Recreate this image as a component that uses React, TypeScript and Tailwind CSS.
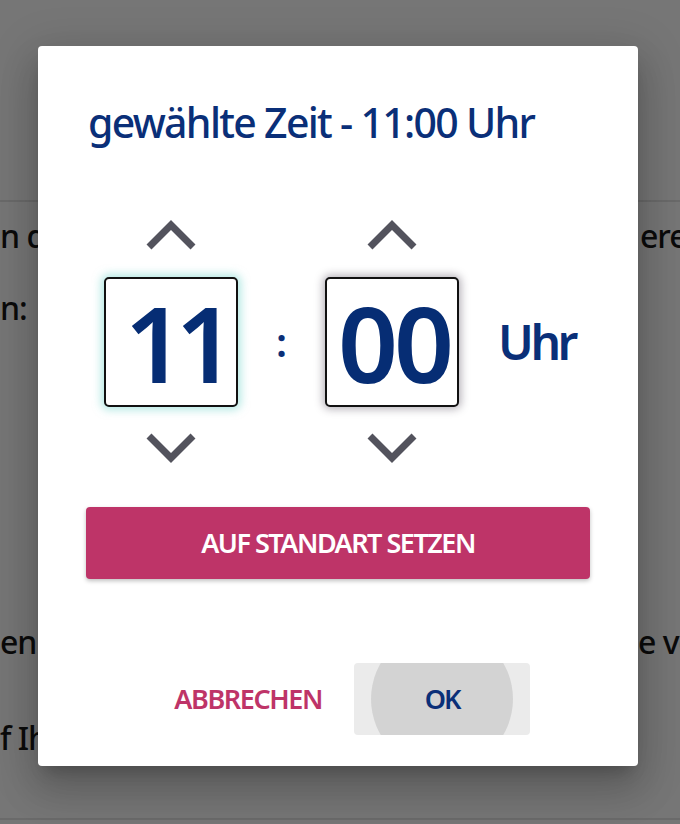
import React from "react";

const font = { fontFamily: '"Noto Sans", "Open Sans", sans-serif' };

function Chevron({ up }: { up?: boolean }) {
  return (
    <svg width="50" height="31" viewBox="0 0 50 31" className="block">
      <polyline
        points={up ? "3,27 25,5 47,27" : "3,4 25,26 47,4"}
        fill="none"
        stroke="#53535d"
        strokeWidth="7"
        strokeLinecap="butt"
        strokeLinejoin="miter"
      />
    </svg>
  );
}

function TimeBox({ value, glow, tight }: { value: string; glow?: boolean; tight?: boolean }) {
  return (
    <div className="flex flex-col items-center">
      <Chevron up />
      <div
        className={
          "mt-[26px] flex h-[130px] w-[134px] items-center justify-center rounded-[5px] border-2 border-[#111] bg-white " +
          (glow
            ? "shadow-[0_0_9px_3px_rgba(120,215,205,0.55)]"
            : "shadow-[0_0_9px_2px_rgba(40,30,50,0.35)]")
        }
      >
        <span
          className={
            "text-[105px] font-semibold leading-none text-[#062d74] " +
            (tight ? "pl-[9px] tracking-[-9px]" : "pl-[4px] tracking-[-4px]")
          }
        >
          {value}
        </span>
      </div>
      <div className="mt-[25px]">
        <Chevron />
      </div>
    </div>
  );
}

export default function App() {
  return (
    <div className="relative h-[824px] w-[680px] overflow-hidden bg-[#767676]" style={font}>
      {/* background page */}
      <div className="pt-[200px] text-[32px] font-medium tracking-[-1px] text-[#0b0b0b]">
        <div className="h-[2px] bg-[#6a6a6a]" />
        <div className="flex justify-between whitespace-nowrap pt-[14px] leading-[40px]">
          <div className="w-[60px] overflow-hidden">n d</div>
          <div className="w-[40px] overflow-hidden">ere</div>
        </div>
        <div className="flex justify-between whitespace-nowrap pt-[32px] leading-[40px]">
          <div className="w-[60px] overflow-hidden">n:</div>
        </div>
        <div className="flex justify-between whitespace-nowrap pt-[294px] leading-[40px]">
          <div className="w-[60px] overflow-hidden">en</div>
          <div className="w-[42px] overflow-hidden">e vo</div>
        </div>
        <div className="flex justify-between whitespace-nowrap pt-[56px] leading-[40px]">
          <div className="w-[60px] overflow-hidden">f Ih</div>
        </div>
        <div className="mt-[60px] h-[2px] bg-[#6a6a6a]" />
      </div>

      {/* dialog */}
      <div className="absolute inset-0 flex justify-start pl-[38px] pt-[46px]">
        <div className="flex h-[720px] w-[600px] flex-col rounded-[4px] bg-white shadow-[0_11px_15px_-7px_rgba(0,0,0,0.2),0_24px_38px_3px_rgba(0,0,0,0.14),0_9px_46px_8px_rgba(0,0,0,0.12)]">
          <h1 className="pl-[50px] pt-[52px] text-[41px] font-medium leading-[48px] tracking-[-1.7px] text-[#0a2f78]">
            gewählte Zeit - 11:00 Uhr
          </h1>

          <div className="ml-[66px] mt-[74px] flex items-center">
            <TimeBox value="11" glow tight />
            <div className="mx-[38px] text-[40px] font-semibold leading-none text-[#0a2f78]">:</div>
            <TimeBox value="00" />
            <div className="ml-[39px] text-[48px] font-semibold leading-none tracking-[-3.5px] text-[#0a2f78]">
              Uhr
            </div>
          </div>

          <div className="mx-[48px] mt-[44px]">
            <button className="flex h-[72px] w-full items-center justify-center rounded-[4px] bg-[#be3468] text-[27px] font-semibold uppercase tracking-[-1.5px] text-white shadow-[0_2px_4px_rgba(0,0,0,0.25)]">
              Auf Standart setzen
            </button>
          </div>

          <div className="mt-[84px] flex items-center justify-end pr-[108px]">
            <button className="px-[16px] text-[27px] font-semibold uppercase tracking-[-1.4px] text-[#be3468]">
              Abbrechen
            </button>
            <button className="relative ml-[16px] flex h-[72px] w-[176px] items-center justify-center overflow-hidden rounded-[4px] bg-[#ebebeb] text-[27px] font-semibold tracking-[-2px] text-[#0a2f78]">
              <span className="absolute left-[17px] top-[-35px] h-[142px] w-[142px] rounded-full bg-[#d3d3d3]" />
              <span className="relative">OK</span>
            </button>
          </div>
        </div>
      </div>
    </div>
  );
}
